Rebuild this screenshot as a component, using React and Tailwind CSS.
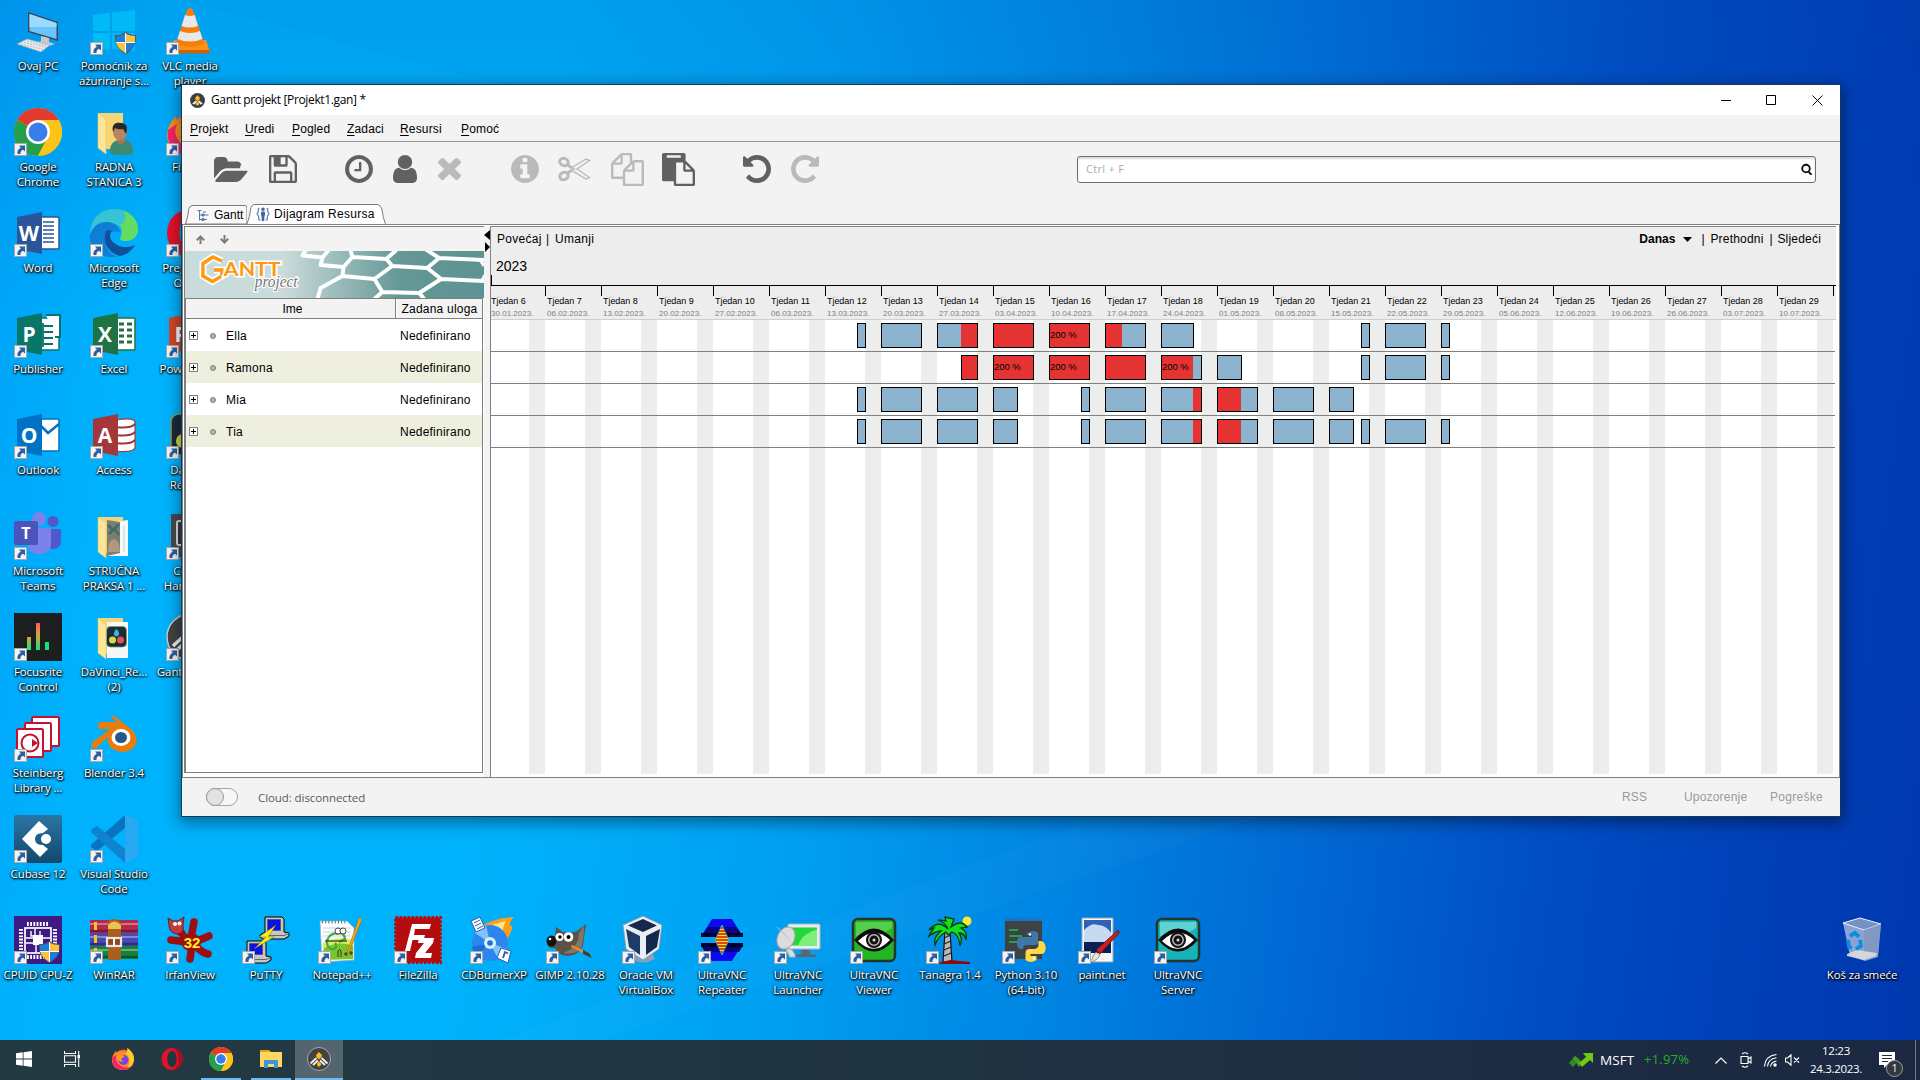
import React from "react";

const SEGOE = "font-['Open_Sans','Noto_Sans',sans-serif]";
const ARIAL = "font-['Liberation_Sans',Arial,sans-serif]";

/* ---------- desktop icon drawings, all on a 48 x 48 canvas ---------- */

const Shield = ({ x = 0, y = 0 }) => (
  <g transform={`translate(${x} ${y})`}>
    <path d="M10.500 0C14 2.500 17 3 21 3c.5 9-3 15-10.500 19C3 18-.5 12 0 3c4 0 7-.5 10.500-3z" fill="#4d5560" />
    <path d="M10 1.800V10H1.200C1 8 1 6 1.100 4 4.500 4 7.500 3.300 10 1.800z" fill="#1c7fd6" />
    <path d="M11 1.800V10h8.800c.2-2 .2-4 .1-6-3.400 0-6.400-.7-8.900-2.200z" fill="#fdc43f" />
    <path d="M1.400 11H10v9.700C5 18 2.300 15 1.400 11z" fill="#fdc43f" />
    <path d="M19.600 11H11v9.700c5-2.700 7.700-5.700 8.600-9.700z" fill="#1c7fd6" />
    <path d="M10.500 1v20M1 10.500h19" stroke="#fff" strokeWidth="1" />
  </g>
);

const ThisPC = () => (
  <>
    <path d="M14 5l30 10v19L14 25z" fill="#3d4650" />
    <path d="M15.500 7l27 9v16l-27-8z" fill="#6cc4ff" />
    <path d="M15.500 7l27 9v4L15.500 20z" fill="#9adaff" />
    <path d="M27 29l8 2v4l6 2-9 3-10-4 5-2z" fill="#c4cad0" />
    <path d="M3 37l10-5 23 6-9 7z" fill="#e8ebee" stroke="#9aa4ad" strokeWidth=".7" />
    <path d="M7 37l22 5.500M10 35.500l22 5M13 34l20 5" stroke="#a9b2ba" strokeWidth=".8" strokeDasharray="2 1" />
  </>
);

const WinUpdate = () => (
  <>
    <path d="M3 8l17-2.500V24H3zM22 5.200L45 3v21H22zM3 26h17v17L3 40zM22 26h23v18l-23-2z" fill="#00b9f5" />
    <Shield x={25} y={25} />
  </>
);

const Vlc = () => (
  <>
    <path d="M8 33h32l4 12H3z" fill="#ff8f12" />
    <path d="M3 43h41l-.5 3.500H3.500z" fill="#c96200" />
    <path d="M21 3q3-4 6 0l11 33q-14 8-28 0z" fill="#f57e0b" />
    <path d="M19 8l-3.500 11q8 3 16.500 0L28.800 8q-5 2-9.800 0zM14 24l-2.500 8q12.500 5 25 0L34 24q-10 4-20 0z" fill="#e6e8ea" />
  </>
);

const ChromeMark = () => (
  <>
    <circle cx="24" cy="24" r="24" fill="#fcc419" />
    <path d="M24 24L3.200 12A24 24 0 0 1 44.800 12L24 13z" fill="#e33b2e" />
    <path d="M3.200 12A24 24 0 0 0 24 48l9.500-18.500L24 24z" fill="#269f4a" />
    <path d="M33.500 29.500L24 48A24 24 0 0 0 44.800 12H24z" fill="#fcc419" />
    <circle cx="24" cy="24" r="12" fill="#fff" />
    <circle cx="24" cy="24" r="9.500" fill="#3a7cec" />
  </>
);

const FolderBack = ({ children }) => (
  <>
    <path d="M8 5h25v36H13z" fill="#f6d574" />
    {children}
    <path d="M8 5l8 6v35L8 40z" fill="#fde59a" stroke="#e8c662" strokeWidth=".6" />
  </>
);

const UserFolder = () => (
  <>
    <FolderBack />
    <path d="M20 46c-1-9 3-14 12-15 8 1 12 6 11 15q-11 2-23 0z" fill="#3d8a6f" />
    <path d="M27 28h8v6l-4 3-4-3z" fill="#a87455" />
    <ellipse cx="30" cy="24" rx="7" ry="8.500" fill="#b98461" />
    <path d="M23 24c-2-9 4-10 8-9 6 0 7 5 5 11l-3-5q-5 1-8-1z" fill="#2b2524" />
  </>
);

const PicFolder = () => (
  <FolderBack>
    <path d="M17 11l21-3v36H17z" fill="#f5f7f8" />
    <path d="M17 8l13 2v31l-13 3z" fill="#7d7d72" />
    <path d="M18 13l5 5-4 4M29 12l-5 5 5 6" stroke="#3f6c6b" strokeWidth="2.500" fill="none" />
    <path d="M18 40q0-12 6-13 6 2 6 13z" fill="#b0997c" />
    <path d="M34 14v26" stroke="#a5dbf0" />
  </FolderBack>
);

const Resolve = ({ s = 1, x = 0, y = 0 }) => (
  <g transform={`translate(${x} ${y}) scale(${s})`}>
    <rect x="5" y="3" width="40" height="41" rx="8" fill="#1d2c3a" stroke="#7aa06a" strokeWidth="1.500" />
    <path d="M25 8q8 7 4 13-4 4-8 0-4-6 4-13z" fill="#3bb4dc" />
    <circle cx="17" cy="30" r="7" fill="#d4dc42" />
    <circle cx="33" cy="30" r="7" fill="#e5534f" />
  </g>
);

const ResolveFolder = () => (
  <FolderBack>
    <path d="M17 9h21v36H17z" fill="#f5f7f8" />
    <Resolve s={0.5} x={14} y={12} />
  </FolderBack>
);

const Firefox = () => (
  <>
    <circle cx="25" cy="26" r="21" fill="#ff5b2e" />
    <path d="M10 8q-8 8-9 18C1 42 13 48 25 48s22-9 22-22c0-9-5-17-14-24 3 6 1 8-2 9-9-6-17-1-21 1q-1-2 0-4z" fill="#ff8a1e" />
    <path d="M33 2c12 8 16 18 13 28q-5 14-18 17 12-8 9-22-2-8-8-12 5-2 4-11z" fill="#ffca2c" />
    <path d="M2 22c-2 18 10 26 23 26q10 0 17-8-20 8-30-8-5-8-1-16z" fill="#f5246a" />
    <circle cx="25" cy="27" r="10.500" fill="#7542e5" />
    <path d="M12 17q6-3 10 0 5 0 5 3l-6 4q-1 5 4 6-9 3-12-5z" fill="#ff9a1f" />
  </>
);

const Opera = () => (
  <>
    <ellipse cx="24" cy="24" rx="23" ry="24" fill="#e3122c" />
    <path d="M24 0a24 24 0 0 1 0 48q14-4 14-24T24 0z" fill="#a90d22" />
    <ellipse cx="24" cy="24" rx="10.500" ry="18" fill="var(--hole,#00a5f9)" />
  </>
);

const Edge = () => (
  <>
    <path d="M24 0c16 0 24 11 24 20 0 8-6 12-12 12-5 0-7-2-5-5C33 19 28 14 20 14 10 14 3 19 0 26 0 10 10 0 24 0z" fill="#36c3d4" />
    <path d="M34 2c9 3 14 11 14 18 0 8-6 12-12 12-5 0-7-2-5-5q3-7-1-11Q38 12 34 2z" fill="#62dd62" />
    <path d="M0 26c2-8 9-14 18-13 8 1 12 6 12 11-6-4-14 0-14 9 0 8 6 14 13 15C12 51-2 40 0 26z" fill="#0d7fd8" />
    <path d="M16 22c-4 10 2 22 14 25 6-1 12-5 15-11-8 4-18 2-23-4-3-4-2-8 0-10-2-1-4-1-6 0z" fill="#144f9b" />
  </>
);

const OfficeTile = ({ color, dark, letter, children }) => (
  <>
    <path d="M26 8h17.500q1.500 0 1.500 1.500v29q0 1.500-1.500 1.500H26z" fill="#fff" stroke={color} strokeWidth="1.500" />
    {children}
    <path d="M3 8l25-5v42L3 40z" fill={dark} />
    <text x="15" y="31.500" fontSize="21" fontWeight="700" fill="#fff" textAnchor="middle" fontFamily="Open Sans">{letter}</text>
  </>
);

const Word = () => (
  <OfficeTile color="#2a5699" dark="#2a5699" letter="W">
    <path d="M29 13h11M29 17h11M29 21h11M29 25h11M29 29h11M29 33h11" stroke="#2a5699" strokeWidth="1.700" />
  </OfficeTile>
);
const Publisher = () => (
  <OfficeTile color="#077568" dark="#077568" letter="P">
    <path d="M32 5h14v22h-5" fill="#fff" stroke="#077568" strokeWidth="2" />
    <path d="M29 16h10M29 22h10M29 28h10M29 34h10M29 13v24" stroke="#077568" strokeWidth="1.800" />
  </OfficeTile>
);
const Excel = () => (
  <OfficeTile color="#1f7244" dark="#1f7244" letter="X">
    <path d="M29 14h5M37 14h5M29 20h5M37 20h5M29 26h5M37 26h5M29 32h5M37 32h5" stroke="#1f7244" strokeWidth="3.200" />
  </OfficeTile>
);
const PowerPoint = () => (
  <OfficeTile color="#d24625" dark="#d24625" letter="P">
    <circle cx="34" cy="20" r="6" fill="#d24625" />
  </OfficeTile>
);
const Outlook = () => (
  <OfficeTile color="#0072c6" dark="#0072c6" letter="O">
    <path d="M28 12h15v22H28z" fill="#fff" />
    <path d="M26 14l8 8 11-9" fill="none" stroke="#0072c6" strokeWidth="2.500" />
  </OfficeTile>
);
const Access = () => (
  <>
    <path d="M26 9q18-3 19 2v26q-3 5-19 3z" fill="#fff" stroke="#a4373a" strokeWidth="1.200" />
    <path d="M26 16q14 2 19-3M26 24q14 2 19-3M26 32q14 2 19-3" fill="none" stroke="#a4373a" strokeWidth="2" />
    <path d="M3 8l25-5v42L3 40z" fill="#a4373a" />
    <text x="15" y="31.500" fontSize="21" fontWeight="700" fill="#fff" textAnchor="middle" fontFamily="Open Sans">A</text>
  </>
);

const Teams = () => (
  <>
    <circle cx="39" cy="9.500" r="5.500" fill="#5059c9" />
    <path d="M34 17h12q1 0 1 1v11q0 8-9 8-4 0-4-4z" fill="#5059c9" />
    <circle cx="25" cy="7" r="7" fill="#7b83eb" />
    <path d="M14 16h22q1 0 1 1v14q0 11-12 11-11 0-11-11z" fill="#7b83eb" />
    <rect y="9" width="24" height="24" rx="2" fill="#4b53bc" />
    <text x="12" y="26.500" fontSize="16" fontWeight="700" fill="#fff" textAnchor="middle" fontFamily="Open Sans">T</text>
  </>
);

const HwBox = () => (
  <>
    <rect x="5" y="2" width="40" height="43" fill="#4a4a4c" />
    <rect x="11" y="9" width="28" height="24" rx="2" fill="#3a3a3c" stroke="#e0e0e0" strokeWidth="2" />
    <path d="M16 12v18M21 12v18" stroke="#777" strokeWidth="2" />
  </>
);

const Focusrite = () => (
  <>
    <defs>
      <linearGradient id="lv" x1="0" y1="0" x2="0" y2="1">
        <stop offset="0" stopColor="#ff5959" /><stop offset=".45" stopColor="#d9a13c" /><stop offset="1" stopColor="#11e87c" />
      </linearGradient>
      <linearGradient id="lv2" x1="0" y1="0" x2="0" y2="1">
        <stop offset="0" stopColor="#e09b42" /><stop offset="1" stopColor="#11e87c" />
      </linearGradient>
    </defs>
    <rect width="48" height="48" fill="#1d1e20" />
    <rect x="13" y="24" width="4" height="13" fill="url(#lv2)" />
    <rect x="22" y="10" width="4" height="27" fill="url(#lv)" />
    <rect x="31" y="29" width="4" height="8" fill="#18e07a" />
  </>
);

const GanttMark = () => (
  <>
    <circle cx="24" cy="24" r="23" fill="#434343" stroke="#c9c9c9" strokeWidth="1.500" />
    <path d="M7 33l12-11M12 36l10-9M41 33L29 22M36 36l-10-9" stroke="#f2f2f2" strokeWidth="3.500" />
    <path d="M24 10l5.500 5.500v4L24 25l-5.500-5.500v-4zM24 29l4 4v3l-4 4-4-4v-3z" fill="#fbbc1f" />
  </>
);

const TitleMark = () => (
  <>
    <circle cx="24" cy="24" r="24" fill="#3f3f41" />
    <path d="M7 34l11-10 5 4-9 9zM41 34L30 24l-5 4 9 9z" fill="#f2f2f2" />
    <path d="M24 7l7 7v6l-7 7-7-7v-6zM24 28l5 5v4l-5 4-5-4v-4z" fill="#fbbc1f" />
  </>
);

const Steinberg = () => (
  <g fill="#fff" stroke="#c8102e" strokeWidth="2">
    <rect x="18" y="3" width="27" height="29" rx="1.500" />
    <rect x="11" y="9" width="26" height="28" rx="1.500" />
    <rect x="3" y="15" width="26" height="28" rx="1.500" />
    <circle cx="16" cy="29" r="8.500" />
    <path d="M18 25l6 4-6 4z" fill="#c8102e" strokeWidth="0" />
  </g>
);

const Blender = () => (
  <>
    <path d="M21 2q3-1 5 1l16 13q6 6 4 14-4 8-14 8-11-1-14-9-1-3 0-6L6 34q-4 1-5-2 0-3 3-5l16-12H10q-3-1-2-5 1-2 3-2h16l-6-5z" fill="#e87d0d" />
    <ellipse cx="31" cy="23.500" rx="9.500" ry="8.500" fill="#fff" />
    <ellipse cx="31" cy="23.500" rx="6" ry="5.500" fill="#265787" />
  </>
);

const Cubase = () => (
  <>
    <defs>
      <linearGradient id="cub" x1="0" y1="0" x2="0" y2="1">
        <stop offset="0" stopColor="#2a76a5" /><stop offset="1" stopColor="#12486b" />
      </linearGradient>
    </defs>
    <rect width="48" height="48" rx="2" fill="url(#cub)" />
    <path d="M25 6l9 8-5 4q-8 0-8 6t8 6l5 4-8 8L8 24z" fill="#fff" />
    <circle cx="32" cy="24" r="5" fill="#fff" />
  </>
);

const VSCode = () => (
  <>
    <path d="M35 0l13 5v37l-13 6z" fill="#28a9f1" />
    <path d="M35 0v13L7 36l-5-3q-2-2 0-4z" fill="#0a73bd" />
    <path d="M2 14l5-3 28 23v14L2 18q-2-2 0-4z" fill="#1083cf" />
  </>
);

const CpuZ = () => (
  <>
    <rect width="48" height="48" fill="#3e1a83" />
    <path d="M13 8h22M13 41h22M7 13v22M41 13v22" stroke="#fff" strokeWidth="4" strokeDasharray="1.800 1.400" />
    <rect x="11" y="12" width="26" height="25" fill="none" stroke="#fff" strokeWidth="1.700" />
    <rect x="19" y="19" width="10" height="10" fill="#fff" />
    <path d="M21 13v6M26 15v5M12 22h7M12 27h7M29 22h7M22 29v7M17 15v5h5" stroke="#fff" strokeWidth="1.400" fill="none" />
    <Shield x={25} y={25} />
  </>
);

const WinRar = () => (
  <>
    <rect y="4" width="48" height="13" rx="1" fill="#b52a4a" />
    <rect y="17" width="48" height="13" rx="1" fill="#4a48b5" />
    <rect y="30" width="48" height="13" rx="1" fill="#15813c" />
    <path d="M0 8h48M0 21h48M0 34h48" stroke="#fff" strokeOpacity=".35" strokeWidth="2" />
    <path d="M0 15h48M0 28h48M0 41h48" stroke="#000" strokeOpacity=".35" strokeWidth="2.500" />
    <path d="M4 6h3v8H4zM4 19h3v8H4zM4 32h3v8H4z" fill="#f4c430" />
    <path d="M18 44V8q0-5 6-5t7 5v36z" fill="#a8601c" />
    <path d="M18 9q6-7 13 0v4H18z" fill="#ecc255" />
    <rect x="17" y="22" width="14" height="8" fill="#8a4a12" stroke="#e3e6ea" strokeWidth="2.200" />
    <path d="M24 22v8" stroke="#fff" strokeWidth="2" />
  </>
);

const Irfan = () => (
  <>
    <g stroke="#9c0f10" strokeLinecap="round" strokeWidth="7.500" fill="none">
      <path d="M28 6l-3 16M5 24l16 2M43 20l-14 6M42 38q-6-1-12-8M24 43l2-14" />
    </g>
    <ellipse cx="25" cy="26" rx="10" ry="9" fill="#9c0f10" />
    <path d="M10 16l6 8 6-4-4-6z" fill="#9c0f10" />
    <path d="M2 2l5 3h5l6-4-1 8q2 9-6 9-8-1-8-9z" fill="#c23a3a" stroke="#57100d" strokeWidth=".8" />
    <circle cx="9" cy="8" r="2" fill="#fff" /><circle cx="13.500" cy="7.500" r="2" fill="#fff" />
    <text x="26" y="32" fontSize="15" fontWeight="700" fill="#ffef20" textAnchor="middle" fontFamily="Liberation Sans">32</text>
  </>
);

const Computer = ({ x, y }) => (
  <g transform={`translate(${x} ${y})`}>
    <path d="M5 1h17l2 2v13l5 1v3l-5 3H3l-3-2v-2l5-3z" fill="#c6c6c6" stroke="#000" strokeWidth="1" />
    <path d="M7.500 3.500h13v11h-13z" fill="#0a10e8" stroke="#555" strokeWidth=".8" />
    <path d="M2 19.500h22l4-1.500" stroke="#666" fill="none" />
  </g>
);
const Putty = () => (
  <>
    <Computer x={18} y={0} />
    <Computer x={0} y={24} />
    <path d="M34 9L17 21h7L12 33l20-12h-6z" fill="#ffef10" stroke="#7a7000" strokeWidth=".5" />
  </>
);

const Notepadpp = () => (
  <>
    <path d="M2 5h27l7 7v32L4 46z" fill="#fbfdff" stroke="#9eb4c4" strokeWidth=".8" />
    <path d="M4 6h24" stroke="#5b6f7d" strokeWidth="3" strokeDasharray="1 2.200" />
    <path d="M5 12h28M5 16h28M5 20h28" stroke="#bcd7ea" strokeWidth="1" />
    <path d="M5 27l30-3v19L6 44z" fill="#7bc42c" />
    <path d="M5 27q14-8 30-3v6q-15-6-30 3z" fill="#d4ef63" />
    <path d="M19 17q-10 1-10 10 1 7 7 6 4-2 1-6M18 18q8-3 9 5l-6 3" fill="none" stroke="#4aa83a" strokeWidth="2.200" />
    <circle cx="20" cy="15" r="3" fill="#fff" stroke="#222" strokeWidth=".8" /><circle cx="25" cy="15" r="3" fill="#fff" stroke="#222" strokeWidth=".8" />
    <path d="M7 25h22" stroke="#333" strokeWidth="1.200" />
    <path d="M20 41v-6q2-3 3 0v6M26 38h4M28 36v4M31 37h4M33 35v4" stroke="#222" fill="none" strokeWidth=".9" />
    <path d="M44 3l-13 33-2 4 .5-5L41 2z" fill="#f5a91f" stroke="#a0670e" strokeWidth=".6" />
  </>
);

const FileZilla = () => (
  <>
    <rect x="1.500" y="1.500" width="45" height="45" fill="#b30d0d" stroke="#b30d0d" strokeWidth="3" strokeDasharray="2.500 1.500" />
    <path d="M18 8h19l-1.500 5H21l-1 6h11l-1.500 5H18.500L16 35h-5z" fill="#fff" />
    <path d="M25 22h15l-1 5-8 10h7l-1 5H21l1-5 8-10h-6z" fill="#fff" />
  </>
);

const CdBurner = () => (
  <>
    <path d="M12 10Q24 2 44 1q-5 5-4 9 3-2 2 3-3 9-8 14z" fill="#ff9d1c" />
    <path d="M18 10q10-3 18-5-4 7-3 12z" fill="#ffe884" />
    <circle cx="20" cy="27" r="18" fill="#2d86ee" />
    <path d="M20 27L5 17q4-7 11-8z" fill="#7fc4ff" />
    <path d="M20 27l17 6q-2 7-9 10z" fill="#7fc4ff" />
    <path d="M20 27L7 40q-4-4-5-9z" fill="#1b6bd8" />
    <circle cx="20" cy="27" r="6" fill="#d9f1ff" /><circle cx="20" cy="27" r="2.800" fill="#1b73d9" />
    <path d="M1 5l9-4 5 11-9 4z" fill="#fff" stroke="#2659b5" />
    <path d="M4 7l6-3M5 10l6-3M7 13l6-3" stroke="#2659b5" />
    <path d="M31 32l10 3-3 12-11-5z" fill="#fff" stroke="#2659b5" />
    <path d="M33 42l2-6 3 1.500" fill="none" stroke="#2659b5" strokeWidth="1.800" />
  </>
);

const Gimp = () => (
  <>
    <path d="M10 11l7 5q8 2 14-1L40 8q-2 14-3 22-4 9-15 10-9 0-13-8-8 1-8-6 1-6 8-6z" fill="#5b5347" />
    <path d="M38 10q0 18-4 24-8 5-17 3 12-4 15-13 0-8 6-14z" fill="#80766a" />
    <ellipse cx="5.500" cy="25" rx="5" ry="5.500" fill="#111" /><circle cx="4" cy="23" r="1.300" fill="#fff" />
    <circle cx="13.500" cy="21" r="4" fill="#fff" /><circle cx="22.500" cy="21" r="4.800" fill="#fff" />
    <circle cx="14" cy="21" r="1.700" /><circle cx="22.500" cy="21" r="2" />
    <path d="M26 29l12 6-1 2-12-6z" fill="#f08a24" /><path d="M37 34l6 3 3 5-9-4z" fill="#4a3b33" />
  </>
);

const VBox = () => (
  <g transform="translate(-3 0)">
    <path d="M14 38q10 6 20 0l2 5q-12 7-24 0z" fill="#8aa0b8" />
    <path d="M24 0l19 9-3 24-16 11L7 33 4 9z" fill="#e9eef5" stroke="#7f93ab" strokeWidth=".8" />
    <path d="M24 3l14 6.500L24 16 9 9.500z" fill="#16294a" />
    <path d="M7 13l14 7v19L10 31z" fill="#1f3c66" />
    <path d="M41 13l-14 7v19l11-8z" fill="#14284a" />
  </g>
);

const Repeater = () => (
  <>
    <path d="M14 3h20l11 18v6L34 45H14L3 27v-6z" fill="#0a0af0" />
    <path d="M9.500 11h29L45 21H3z" fill="#050580" />
    <path d="M3 17h42v4H3z" fill="#000028" />
    <path d="M3 21h42v6H3z" fill="#00a4f8" />
    <path d="M3 27h42v4H3z" fill="#000028" />
    <path d="M4 31h40l-3 5H7z" fill="#050580" />
    <path d="M24 9l7 15-7 15-7-15z" fill="#ffe60a" stroke="#2ad" strokeWidth="1" />
    <path d="M23 12h2M21 15h6M20 18h8M18.500 21h11M18 24h12M18.500 27h11M20 30h8M21 33h6M23 36h2" stroke="#d01414" strokeWidth="1.300" />
  </>
);

const Launcher = () => (
  <>
    <rect x="14" y="8" width="32" height="25" rx="1" fill="#e8edf0" stroke="#a9b4ba" />
    <rect x="18" y="11.500" width="25" height="18" fill="#23d63a" />
    <path d="M24 29.500q4-12 19-16v16z" fill="#7df07c" />
    <path d="M27 34h8l1 4 6 1v2H21v-2l6-1z" fill="#5a6670" />
    <ellipse cx="12" cy="22" rx="8.500" ry="11.500" transform="rotate(25 12 22)" fill="#dcdcdc" stroke="#a5a5a5" />
    <path d="M3 11l12 12M12 33l4 8h5v-2l-3-5z" stroke="#bbb" fill="#ddd" />
  </>
);

const Eye = ({ color, light }) => (
  <>
    <rect x="3" y="3" width="42" height="42" rx="5" fill={color} stroke="#27332f" strokeWidth="2.500" />
    <path d="M6 6h36v6Q28 22 6 20z" fill={light} opacity=".6" />
    <path d="M4 24q20-23 40 0-20 23-40 0z" fill="#0b0b0b" />
    <path d="M8 25q16-16 32-1-16 17-32 1z" fill="#fff" />
    <circle cx="24" cy="24" r="8" fill="#111" /><circle cx="24" cy="24" r="5.200" fill="none" stroke="#bbb" strokeWidth="1.500" />
    <circle cx="24" cy="24" r="1.500" fill="#ddd" />
  </>
);
const EyeGreen = () => <Eye color="#25b524" light="#77df66" />;
const EyeTeal = () => <Eye color="#16b3b8" light="#8ee4e6" />;

const Palm = () => (
  <>
    <circle cx="41" cy="5" r="4.500" fill="#ffe92b" />
    <path d="M19 15h5l2 31h-9z" fill="#b9b9b9" stroke="#111" strokeWidth="1.200" />
    <path d="M18 22l7-3M18 28l7-3M18 34l7-3M18 40l7-3" stroke="#222" strokeWidth="1.300" />
    <path d="M22 13Q12 3 3 14l5-2-6 9q7-6 13-6-8 6-6 14 3-9 11-13l2 3 4-3q7 2 8 14 3-8-1-13 6 0 7 7 2-8-5-12l6-1Q35 3 25 11l3-8-9-2 1 4-8-1q8 3 10 9z" fill="#10e020" stroke="#053d07" strokeWidth="1.300" />
    <path d="M12 47l12-3 20 2v2H12z" fill="#930808" />
  </>
);

const Python = () => (
  <>
    <rect x="3" y="3" width="37" height="40" fill="#3d4244" /><rect x="3" y="2" width="37" height="3" fill="#1976c5" />
    <path d="M7 14h9M7 20h13M7 26h9" stroke="#23c04a" strokeWidth="1.400" />
    <path d="M25 17q7-4 11 0v9q0 3-3 3h-8q-4 0-4 4h-3q-4-2-3-9 1-3 4-3h11v-2h-5z" fill="#3d78a9" />
    <path d="M37 22h3q5 2 4 9-1 4-4 4H29v2h6v4q-6 4-11 0v-7q0-4 4-4h5q4-1 4-4z" transform="translate(-.5 3)" fill="#ffd846" />
    <circle cx="28" cy="18.500" r="1.200" fill="#fff" /><circle cx="32" cy="42.500" r="1.200" fill="#fff" />
  </>
);

const PaintNet = () => (
  <>
    <path d="M4 2h31v44H4z" fill="#f6f7f8" stroke="#9ba7b0" />
    <path d="M6 4h27v33H6z" fill="#2c62b8" />
    <path d="M6 14q8-8 14-5 8 0 13 8v9H6z" fill="#c6dbf2" />
    <path d="M6 26h27v11H6z" fill="#0b2057" />
    <path d="M18 34L39 15q3-1 2 2L22 38z" fill="#c91f22" stroke="#5b0b0d" strokeWidth=".7" />
    <path d="M9 46q6-1 6-6l3-4 4 3q-4 8-13 7z" fill="#e8e4dc" stroke="#555" strokeWidth=".6" />
  </>
);

const Bin = () => (
  <>
    <path d="M5 7l16-5 22 6-3 33-13 4-15-5z" fill="#b8c7e0" opacity=".75" />
    <path d="M5 7l17-5 21 6-17 6z" fill="#7591c4" stroke="#e8eefa" strokeWidth="1" />
    <path d="M26 14l17-6-4 31-13 5z" fill="#7d95bd" opacity=".8" />
    <path d="M9 38l10-4 20 3-1 3-12 4-17-4z" fill="#dbdcd8" opacity=".9" />
    <path d="M12 20l5-3 4 4M10 24l1 7 3 1M18 33l5-3-1-6" fill="none" stroke="#0f8ce0" strokeWidth="3.800" />
  </>
);

/* ---------- desktop ---------- */

const ICONS = [
  [0, 0, "Ovaj PC", ThisPC, false],
  [1, 0, "Pomoćnik za\nažuriranje s...", WinUpdate],
  [2, 0, "VLC media\nplayer", Vlc],
  [0, 1, "Google\nChrome", ChromeMark],
  [1, 1, "RADNA\nSTANICA 3", UserFolder, false],
  [2, 1, "Firefox", Firefox],
  [0, 2, "Word", Word],
  [1, 2, "Microsoft\nEdge", Edge],
  [2, 2, "Preglednik\nOpera", Opera],
  [0, 3, "Publisher", Publisher],
  [1, 3, "Excel", Excel],
  [2, 3, "PowerPoint", PowerPoint],
  [0, 4, "Outlook", Outlook],
  [1, 4, "Access", Access],
  [2, 4, "DaVinci\nResolve", Resolve],
  [0, 5, "Microsoft\nTeams", Teams],
  [1, 5, "STRUČNA\nPRAKSA 1 ...", PicFolder, false],
  [2, 5, "CPUID\nHardware", HwBox],
  [0, 6, "Focusrite\nControl", Focusrite],
  [1, 6, "DaVinci_Re...\n(2)", ResolveFolder, false],
  [2, 6, "GanttProject", GanttMark],
  [0, 7, "Steinberg\nLibrary ...", Steinberg],
  [1, 7, "Blender 3.4", Blender],
  [0, 8, "Cubase 12", Cubase],
  [1, 8, "Visual Studio\nCode", VSCode],
  [0, 9, "CPUID CPU-Z", CpuZ],
  [1, 9, "WinRAR", WinRar],
  [2, 9, "IrfanView", Irfan],
  [3, 9, "PuTTY", Putty],
  [4, 9, "Notepad++", Notepadpp],
  [5, 9, "FileZilla", FileZilla],
  [6, 9, "CDBurnerXP", CdBurner],
  [7, 9, "GIMP 2.10.28", Gimp],
  [8, 9, "Oracle VM\nVirtualBox", VBox],
  [9, 9, "UltraVNC\nRepeater", Repeater],
  [10, 9, "UltraVNC\nLauncher", Launcher],
  [11, 9, "UltraVNC\nViewer", EyeGreen],
  [12, 9, "Tanagra 1.4", Palm],
  [13, 9, "Python 3.10\n(64-bit)", Python],
  [14, 9, "paint.net", PaintNet],
  [15, 9, "UltraVNC\nServer", EyeTeal],
  [24, 9, "Koš za smeće", Bin, false],
];

const DesktopIcon = ({ col, row, label, Icon, shortcut = true }) => (
  <div className="flex flex-col items-center" style={{ gridColumn: col + 1, gridRow: row + 1 }}>
    <div className="relative h-12 w-12">
      <svg viewBox="0 0 48 48" className="h-12 w-12"><Icon /></svg>
      {shortcut && (
        <svg viewBox="0 0 13 13" className="absolute bottom-0 left-0 h-[13px] w-[13px]">
          <rect x=".5" y=".5" width="12" height="12" fill="#f4f4f4" stroke="#a8a8a8" />
          <path d="M5 2.500h6v6L9 6.700Q6 8 6.500 11H3.600Q2.500 7 6.800 4.400z" fill="#2c5ea6" />
        </svg>
      )}
    </div>
    <div className={`mt-[3px] text-center text-[11.5px] leading-[15px] tracking-[-0.1px] whitespace-pre text-white [text-shadow:1px_1px_2px_#000,0_1px_2px_#000,0_0_3px_#000a] ${SEGOE}`}>
      {label}
    </div>
  </div>
);

/* ---------- application window ---------- */

const MENU = [
  ["P", "rojekt", "w-[55px]"],
  ["U", "redi", "w-[47px]"],
  ["P", "ogled", "w-[55px]"],
  ["Z", "adaci", "w-[53px]"],
  ["R", "esursi", "w-[61px]"],
  ["P", "omoć", "w-[50px]"],
];

const UNDO = "M1664 896q0 156-61 298t-164 245-245 164-298 61q-172 0-327-72.500T305 1387q-7-10-6.500-22.500t8.500-20.500l137-138q10-9 25-9 16 2 23 12 73 95 179 147t225 52q104 0 198.500-40.500T1258 1258t109.500-163.500T1408 896t-40.500-198.500T1258 534t-163.500-109.500T896 384q-98 0-188 35.500T548 521l137 138q31 30 14 69-17 40-59 40H192q-26 0-45-19t-19-45V256q0-42 40-59 39-17 69 14l130 129q107-101 244.500-156.500T896 128q156 0 298 61t245 164 164 245 61 298z";

const TOOLS = [
  { cls: "ml-8 w-[34px] h-[25px]", vb: "64 128 1910 1408", d: "M1943 952q0 31-31 66l-336 396q-43 51-120.500 86.500T1312 1536H224q-34 0-60.500-13T137 1480q0-31 31-66l336-396q43-51 120.500-86.500T768 896h1088q34 0 60.500 13t26.500 43zM1536 608v160H768q-94 0-197 47.500T407 935L70 1331l-5 6q0-4-.5-12.500T64 1312V352q0-92 66-158t158-66h320q92 0 158 66t66 158v32h544q92 0 158 66t66 158z" },
  { cls: "ml-[21px] w-7 h-7", vb: "128 128 1536 1536", d: "M512 1536h768v-384H512v384zm896 0h128V640q0-14-10-38.500t-20-34.500l-281-281q-10-10-34-20t-39-10v416q0 40-28 68t-68 28H480q-40 0-68-28t-28-68V256H256v1280h128v-416q0-40 28-68t68-28h832q40 0 68 28t28 68v416zm-384-928V288q0-13-9.500-22.500T992 256H800q-13 0-22.500 9.500T768 288v320q0 13 9.500 22.500T800 640h192q13 0 22.500-9.500t9.500-22.500zm640 32v928q0 40-28 68t-68 28H224q-40 0-68-28t-28-68V224q0-40 28-68t68-28h928q40 0 88 20t76 48l280 280q28 28 48 76t20 88z" },
  { cls: "ml-12 w-7 h-7", vb: "128 128 1536 1536", d: "M1024 544v448q0 14-9 23t-23 9H672q-14 0-23-9t-9-23v-64q0-14 9-23t23-9h224V544q0-14 9-23t23-9h64q14 0 23 9t9 23zm416 352q0-148-73-273t-198-198-273-73-273 73-198 198-73 273 73 273 198 198 273 73 273-73 198-198 73-273zm224 0q0 209-103 385.500T1281.500 1561 896 1664t-385.500-103T231 1281.500 128 896t103-385.500T510.500 231 896 128t385.500 103T1561 510.500 1664 896z" },
  { cls: "ml-5 w-6 h-7", vb: "256 128 1280 1536", d: "M1536 1399q0 109-62.500 187t-150.500 78H469q-88 0-150.500-78T256 1399q0-85 8.500-160.500t31.500-152 58.500-131 94-89T583 832q131 128 313 128t313-128q76 0 134.500 34.500t94 89 58.500 131 31.500 152 8.500 160.500zm-256-887q0 159-112.500 271.500T896 896 624.500 783.500 512 512t112.500-271.500T896 128t271.500 112.500T1280 512z" },
  { cls: "ml-[21px] w-[23px] h-[22px]", off: true, vb: "302 366 1188 1188", d: "M1490 1322q0 40-28 68l-136 136q-28 28-68 28t-68-28l-294-294-294 294q-28 28-68 28t-68-28l-136-136q-28-28-28-68t28-68l294-294-294-294q-28-28-28-68t28-68l136-136q28-28 68-28t68 28l294 294 294-294q28-28 68-28t68 28l136 136q28 28 28 68t-28 68l-294 294 294 294q28 28 28 68z" },
  { cls: "ml-[50px] w-7 h-7", off: true, vb: "128 128 1536 1536", d: "M1152 1376v-160q0-14-9-23t-23-9h-96V672q0-14-9-23t-23-9H672q-14 0-23 9t-9 23v160q0 14 9 23t23 9h96v320h-96q-14 0-23 9t-9 23v160q0 14 9 23t23 9h448q14 0 23-9t9-23zm-128-896V320q0-14-9-23t-23-9H800q-14 0-23 9t-9 23v160q0 14 9 23t23 9h192q14 0 23-9t9-23zm640 416q0 209-103 385.500T1281.500 1561 896 1664t-385.500-103T231 1281.500 128 896t103-385.500T510.500 231 896 128t385.500 103T1561 510.500 1664 896z" },
  { cls: "ml-[19px] w-[33px] h-[26px]", off: true, cut: true },
  { cls: "ml-5 w-[33px] h-[33px]", off: true, vb: "0 0 1792 1792", d: "M1696 384q40 0 68 28t28 68v1216q0 40-28 68t-68 28H736q-40 0-68-28t-28-68v-288H96q-40 0-68-28t-28-68V640q0-40 20-88t48-76L476 68q28-28 76-48t88-20h416q40 0 68 28t28 68v328q68-40 128-40h416zm-544 213L853 896h299V597zM512 213L213 512h299V213zm196 647l316-316V128H640v416q0 40-28 68t-68 28H128v640h512v-256q0-40 20-88t48-76zm956 804V512h-384v416q0 40-28 68t-68 28H768v640h896z" },
  { cls: "ml-[18px] w-[33px] h-[33px]", vb: "0 0 1792 1792", d: "M768 1664h896v-640h-416q-40 0-68-28t-28-68V512H768v1152zm256-1440v-64q0-13-9.500-22.500T992 128H288q-13 0-22.500 9.500T256 160v64q0 13 9.500 22.500T288 256h704q13 0 22.500-9.500t9.500-22.500zm256 672h299l-299-299v299zm512 128v672q0 40-28 68t-68 28H736q-40 0-68-28t-28-68v-160H96q-40 0-68-28t-28-68V96q0-40 28-68T96 0h1088q40 0 68 28t28 68v328q21 13 36 28l408 408q28 28 48 76t20 88z" },
  { cls: "ml-12 w-7 h-7", vb: "128 128 1536 1536", d: UNDO },
  { cls: "ml-5 w-7 h-7 -scale-x-100", off: true, vb: "128 128 1536 1536", d: UNDO },
];

const Tool = ({ t }) =>
  t.cut ? (
    <svg viewBox="0 0 33 26" className={`shrink-0 ${t.cls}`} fill="none" stroke="#bababa">
      <ellipse cx="6" cy="6" rx="4.300" ry="3.600" transform="rotate(25 6 6)" strokeWidth="3" />
      <ellipse cx="6" cy="20" rx="4.300" ry="3.600" transform="rotate(-25 6 20)" strokeWidth="3" />
      <path d="M9 8.500L14 12M9 17.500L14 14" strokeWidth="3" />
      <path d="M14 11.500L28 3l3.500 1.500L19 13l12.500 8.500L28 23l-14-8.500z" strokeWidth="1.400" />
      <circle cx="16" cy="13" r="1" strokeWidth="1" />
    </svg>
  ) : (
    <svg viewBox={t.vb} preserveAspectRatio="none" className={`shrink-0 ${t.cls}`} fill={t.off ? "#bababa" : "#616161"}>
      <path d={t.d} fillRule="nonzero" />
    </svg>
  );

const Banner = () => (
  <svg viewBox="0 0 300 47" preserveAspectRatio="none" className="block h-[47px] w-[299px] shrink-0">
    <defs>
      <linearGradient id="bn" x1="0" x2="1" y1="0" y2="0">
        <stop offset="0" stopColor="#c9dbda" /><stop offset=".33" stopColor="#c9dbda" /><stop offset=".72" stopColor="#649796" /><stop offset="1" stopColor="#5d9392" />
      </linearGradient>
    </defs>
    <rect width="300" height="47" fill="url(#bn)" />
    <g fill="none" stroke="#fff" strokeWidth="4" strokeLinejoin="round">
      <path d="M121 -1L118 4.500L138 6.500L144 -1M138 6.500L136 14L159 16L168 6L166 -1M168 6L202 8L212 -1M202 8L208 15L243 17L255 7L241 -2M255 7L300 9M243 17L257 28L300 30M257 28L235 42L240 48M159 16L158 25M190 28L208 15M158 25L190 28L198 41L235 42M198 41L190 48M158 25L136 37L133 48" />
      <path d="M296 9L300 15M298 29l3-5" strokeWidth="3" />
    </g>
    <path d="M37 10L28 6L18 12.500V25L27.500 30.500L37 25V19H29" fill="none" stroke="#fff" strokeWidth="7" />
    <path d="M37 10L28 6L18 12.500V25L27.500 30.500L37 25V19H29" fill="none" stroke="#ff9710" strokeWidth="3.400" />
    <text x="39" y="25.500" fontSize="18" fontWeight="700" textLength="57" lengthAdjust="spacingAndGlyphs" fill="#ff9710" stroke="#fff" strokeWidth="3" paintOrder="stroke" fontFamily="Lato">ANTT</text>
    <text x="70" y="36" fontSize="17" fontStyle="italic" textLength="43" lengthAdjust="spacingAndGlyphs" fill="#767676" stroke="#fff" strokeWidth="2.500" paintOrder="stroke" fontFamily="Liberation Serif">project</text>
  </svg>
);

const PEOPLE = ["Ella", "Ramona", "Mia", "Tia"];

const WEEKS = [
  "30.01.2023.", "06.02.2023.", "13.02.2023.", "20.02.2023.", "27.02.2023.", "06.03.2023.", "13.03.2023.", "20.03.2023.",
  "27.03.2023.", "03.04.2023.", "10.04.2023.", "17.04.2023.", "24.04.2023.", "01.05.2023.", "08.05.2023.", "15.05.2023.",
  "22.05.2023.", "29.05.2023.", "05.06.2023.", "12.06.2023.", "19.06.2023.", "26.06.2023.", "03.07.2023.", "10.07.2023.",
];

/* Each bar: week number, first day, then segments of [overloaded, days, text]. */
const LOADS = [
  [
    [12, 4, [0, 1]], [13, 0, [0, 5]], [14, 0, [0, 3], [1, 2]], [15, 0, [1, 5]], [16, 0, [1, 5, "200 %"]],
    [17, 0, [1, 2], [0, 3]], [18, 0, [0, 4]], [21, 4, [0, 1]], [22, 0, [0, 5]], [23, 0, [0, 1]],
  ],
  [
    [14, 3, [1, 2]], [15, 0, [1, 5, "200 %"]], [16, 0, [1, 5, "200 %"]], [17, 0, [1, 5]], [18, 0, [1, 4, "200 %"], [0, 1]],
    [19, 0, [0, 3]], [21, 4, [0, 1]], [22, 0, [0, 5]], [23, 0, [0, 1]],
  ],
  [
    [12, 4, [0, 1]], [13, 0, [0, 5]], [14, 0, [0, 5]], [15, 0, [0, 3]], [16, 4, [0, 1]], [17, 0, [0, 5]],
    [18, 0, [0, 4], [1, 1]], [19, 0, [1, 3], [0, 2]], [20, 0, [0, 5]], [21, 0, [0, 3]],
  ],
  [
    [12, 4, [0, 1]], [13, 0, [0, 5]], [14, 0, [0, 5]], [15, 0, [0, 3]], [16, 4, [0, 1]], [17, 0, [0, 5]],
    [18, 0, [0, 4], [1, 1]], [19, 0, [1, 3], [0, 2]], [20, 0, [0, 5]], [21, 0, [0, 3]], [21, 4, [0, 1]], [22, 0, [0, 5]], [23, 0, [0, 1]],
  ],
];

const Bar = ({ bar }) => {
  const [week, day, ...segs] = bar;
  const days = segs.reduce((n, s) => n + s[1], 0);
  return (
    <div
      className="row-start-1 mt-[3px] -mr-px flex h-[25px] overflow-hidden border border-black"
      style={{ gridColumn: `${(week - 6) * 7 + day + 1} / span ${days}` }}
    >
      {segs.map(([over, n, text], i) => (
        <div
          key={i}
          className={`flex items-center overflow-hidden text-[9.5px] tracking-[-0.05px] whitespace-nowrap ${over ? "bg-[#e53333]" : "bg-[#8cb4ce]"}`}
          style={{ flex: `${n} 1 0px` }}
        >
          {text}
        </div>
      ))}
    </div>
  );
};

const Chart = () => (
  <div className="flex h-[551px] w-[1346px] flex-col overflow-hidden border-t border-l border-[#808080]">
    <div className="flex h-[59px] shrink-0 flex-col border-b border-black bg-[#ededed]">
      <div className="flex h-6 items-center pr-[15px] pl-[6px] text-[12px]">
        <span className="w-[45px] tracking-[0.3px]">Povećaj</span>
        <span className="w-[13px] pl-1">|</span>
        <span className="tracking-[0.3px]">Umanji</span>
        <span className="ml-auto font-bold">Danas</span>
        <svg viewBox="0 0 9 5" className="mx-[8px] h-[5px] w-[9px]"><path d="M0 0h9L4.500 5z" /></svg>
        <span className="w-[9px] pl-px">|</span>
        <span className="w-[58px] pl-px tracking-[0.2px]">Prethodni</span>
        <span className="w-[10px] pl-[2px]">|</span>
        <span className="tracking-[0.2px]">Sljedeći</span>
      </div>
      <div className="flex grow flex-col">
        <div className="pt-[7px] pl-[5px] text-[14px] leading-[16px]">2023</div>
        <div className="mt-auto h-[10px] w-px bg-black" />
      </div>
    </div>
    <div className="-ml-[2px] flex h-[34px] shrink-0 border-b border-[#cfcfcf] bg-[#ededed]">
      {WEEKS.map((d, i) => (
        <div key={d} className="w-14 shrink-0 whitespace-nowrap">
          <div className="h-[10px] w-px bg-black" />
          <div className="pl-[2px] text-[9px] leading-[10px] tracking-[-0.05px]">Tjedan {i + 6}</div>
          <div className="mt-[3px] pl-[2px] text-[8px] leading-[10px] tracking-[0.02px] text-[#808080]">{d}</div>
        </div>
      ))}
      <div className="h-[10px] w-px shrink-0 bg-black" />
    </div>
    <div className="h-[455px] w-[1346px] shrink-0 bg-white pr-px">
      <div className="-ml-[2px] h-[454px] bg-[repeating-linear-gradient(90deg,#fff_0,#fff_40px,#ededed_40px,#ededed_56px)]">
        {LOADS.map((bars, r) => (
          <div key={r} className="grid h-8 w-[1346px] grid-cols-[repeat(168,8px)] border-b border-[#808080]">
            {bars.map((b, i) => <Bar key={i} bar={b} />)}
          </div>
        ))}
      </div>
    </div>
  </div>
);

const ResourceTable = () => (
  <div className="flex h-[475px] w-[298px] flex-col border-t border-b border-[#808080] bg-white text-[12px]">
    <div className="flex h-full w-[298px] flex-col border-r border-l border-[#808080]">
      <div className="flex h-[20px] border-b border-[#808080] bg-[#f3f3f3]">
        <div className="flex w-[210px] items-center justify-center border-r border-[#808080] pt-px pl-1">Ime</div>
        <div className="flex grow items-center justify-center border-l border-white pt-px tracking-[0.2px]">Zadana uloga</div>
      </div>
      {PEOPLE.map((p, i) => (
        <div key={p} className={`flex h-8 items-center pt-px ${i % 2 ? "bg-[#efefe0]" : "bg-white"}`}>
          <svg viewBox="0 0 9 9" className="ml-[3px] h-[9px] w-[9px]">
            <rect x=".5" y=".5" width="8" height="8" fill="#fff" stroke="#808080" />
            <path d="M2 4.500h5M4.500 2v5" stroke="#000" />
          </svg>
          <div className="ml-3 h-[6px] w-[6px] rounded-full border border-[#7d7d7d] bg-[#b5b5b5]" />
          <span className="ml-[10px] w-[174px] tracking-[0.25px]">{p}</span>
          <span className="tracking-[0.22px]">Nedefinirano</span>
        </div>
      ))}
    </div>
  </div>
);

const AppWindow = () => (
  <div className={`absolute top-[84px] left-[181px] flex h-[733px] w-[1660px] flex-col border border-[#17375a] bg-[#f3f3f3] text-black shadow-[0_4px_14px_2px_rgba(0,0,0,0.4)] ${ARIAL}`}>
    <div className={`flex h-[30px] shrink-0 items-center bg-white text-[12px] ${SEGOE}`}>
      <svg viewBox="0 0 48 48" className="ml-[8px] h-[15px] w-[15px]"><TitleMark /></svg>
      <span className="ml-[6px] tracking-[-0.35px]">Gantt projekt [Projekt1.gan] *</span>
      <svg viewBox="0 0 102 11" className="mr-[17px] ml-auto h-[11px] w-[102px]" fill="none" stroke="#000">
        <path d="M0 5.500h10M45.500 .5h9v9h-9zM91.500 .5l10 10M101.500 .5l-10 10" />
      </svg>
    </div>
    <div className="flex h-[27px] shrink-0 items-center border-b border-[#979797] pt-[2px] pl-[8px] text-[12px] tracking-[0.15px]">
      {MENU.map(([k, rest, w]) => (
        <span key={k + rest} className={`${w} whitespace-nowrap`}>
          <span className="underline underline-offset-2">{k}</span>{rest}
        </span>
      ))}
    </div>
    <div className="flex h-[54px] shrink-0 items-center">
      {TOOLS.map((t, i) => <Tool key={i} t={t} />)}
      <div className={`mr-[24px] ml-auto flex h-[27px] w-[739px] items-center justify-between rounded-[3px] border border-[#6f6f6f] bg-white pr-[3px] pl-[8px] text-[11px] text-[#a8acae] shadow-[inset_0_2px_2px_#dcdcdc] ${SEGOE}`}>
        <span className="tracking-[0.3px]">Ctrl + F</span>
        <svg viewBox="0 0 12 12" className="h-3 w-3" fill="none" stroke="#111" strokeWidth="1.900">
          <circle cx="6" cy="5.500" r="3.800" /><path d="M8.600 8.600L11.500 12" />
        </svg>
      </div>
    </div>
    <div className="flex h-[28px] shrink-0 items-end pl-[3px] text-[12px]">
      <div className="relative flex h-[19px] w-[62px] items-center leading-none">
        <svg viewBox="0 0 62 19" className="absolute inset-0 h-full w-full">
          <path d="M.5 19Q3 12 3.500 6Q4 .5 8 .5H60Q62 .5 62 3V19z" fill="#f9f9f9" stroke="#7a7a7a" />
        </svg>
        <svg viewBox="0 0 12 12" className="relative ml-[12px] h-3 w-3" fill="none" stroke="#5d79ab">
          <path d="M.5 1.500h4M2.500 2v9.500M2.500 6h3M2.500 10.500h3M6 6h5.500M6 10.500h4M6 3h3" /><path d="M5 5h2v2H5zM5 9.500h2v2H5z" fill="#5d79ab" />
        </svg>
        <span className="relative ml-[5px]">Gantt</span>
      </div>
      <div className="relative flex h-[20px] w-[139px] items-center">
        <svg viewBox="0 0 139 20" className="absolute inset-0 h-full w-full">
          <path d="M0 20Q3 12 3.500 6Q4 .5 8 .5H130Q134 1 135 6Q136 14 138.500 20" fill="#fff" stroke="#7a7a7a" />
        </svg>
        <svg viewBox="0 0 14 14" className="relative ml-[9px] h-[14px] w-[14px]" fill="#45659c">
          <circle cx="7" cy="2.200" r="1.700" /><path d="M5.200 4.500h3.600l.4 4H8.500l-.3 5.500H5.800L5.500 8.500h-.7z" />
          <g fill="none" stroke="#5f7db4" strokeWidth="1.200"><path d="M3.500 1Q1.500 1.500 2.500 4L1 7l1.500 2 .5 4h1.500M10.500 1q2 .5 1 3L13 7l-1.500 2-.5 4H9.500" /></g>
        </svg>
        <span className="relative ml-[4px] tracking-[0.3px]">Dijagram Resursa</span>
      </div>
    </div>
    <div className="flex h-[554px] shrink-0 border border-[#808080] bg-white pt-px pl-px">
      <div className="flex h-[547px] w-[300px] shrink-0 flex-col border-t border-l border-[#808080]">
        <div className="flex h-6 shrink-0 items-center bg-[#f3f3f3]">
          <svg viewBox="0 0 33 9" className="ml-[11px] h-[9px] w-[33px]" fill="none" stroke="#7d7d7d" strokeWidth="2">
            <path d="M4.500 9V2M.8 5.200L4.500 1.500l3.700 3.700M28.500 0v7M24.800 3.800l3.700 3.700 3.700-3.700" />
          </svg>
        </div>
        <Banner />
        <ResourceTable />
      </div>
      <div className="h-full w-[6px] shrink-0 bg-[#f3f3f3] pt-[4px]">
        <svg viewBox="0 0 6 22" className="h-[22px] w-[6px]"><path d="M6 0v10L0 5zM1 12v10l5-5z" /></svg>
      </div>
      <Chart />
    </div>
    <div className="flex h-[38px] grow items-center text-[12px]">
      <div className="ml-[24px] flex h-[18px] w-[32px] rounded-full border border-[#a3a3a3] bg-[#f7f7f7]">
        <div className="-mt-px -ml-px h-[18px] w-[18px] rounded-full border border-[#9a9a9a] bg-[#e2e2e2]" />
      </div>
      <span className={`ml-[20px] pt-px text-[11.5px] tracking-[-0.08px] text-[#5a5a5a] ${SEGOE}`}>Cloud: disconnected</span>
      <span className="ml-auto w-[62px] text-[#9a9a9a] tracking-[0.2px]">RSS</span>
      <span className="w-[86px] text-[#9a9a9a] tracking-[0.2px]">Upozorenje</span>
      <span className="mr-[17px] text-[#9a9a9a] tracking-[0.3px]">Pogreške</span>
    </div>
  </div>
);

/* ---------- taskbar ---------- */

const TaskButton = ({ wide, active, open, children }) => (
  <div className={`flex h-10 flex-col items-center justify-center ${wide} ${active ? "bg-[#53666f]" : ""}`}>
    <div className="flex h-[38px] items-center">{children}</div>
    <div className={`h-[2px] ${open ? "bg-[#76b9ed]" : ""} ${active ? "w-12" : "w-10"}`} />
  </div>
);

const Taskbar = () => (
  <div className={`flex h-10 shrink-0 items-center bg-[linear-gradient(90deg,#233a43,#213540_40%,#1d2d42_75%,#1a2841)] text-white ${SEGOE}`}>
    <TaskButton wide="w-12">
      <svg viewBox="0 0 16 16" className="h-4 w-4" fill="#fff"><path d="M0 2.200L6.700 1.300v6.200H0zM7.500 1.200L16 0v7.500H7.500zM0 8.400h6.700v6.300L0 13.800zM7.500 8.400H16V16l-8.500-1.200z" /></svg>
    </TaskButton>
    <TaskButton wide="w-12">
      <svg viewBox="0 0 16 16" className="h-4 w-4" fill="none" stroke="#fff" strokeWidth="1.100">
        <path d="M.5 0v2.500h11V0M.5 16v-2.500h11V16M.5 4.700h11v6.600H.5zM14.700 0v4M14.700 8v8" /><path d="M14 4.500h1.500V7H14z" fill="#fff" />
      </svg>
    </TaskButton>
    <TaskButton wide="w-[53px]"><svg viewBox="0 0 48 50" className="h-6 w-6"><Firefox /></svg></TaskButton>
    <TaskButton wide="w-[46px] [--hole:#22383f]"><svg viewBox="0 0 48 48" className="h-6 w-[22px]"><Opera /></svg></TaskButton>
    <TaskButton wide="w-[52px]" open><svg viewBox="0 0 48 48" className="h-6 w-6"><ChromeMark /></svg></TaskButton>
    <TaskButton wide="w-12" open>
      <svg viewBox="0 0 22 20" className="h-5 w-[22px]">
        <path d="M0 1h9l2 2h-9L0 5z" fill="#e8a317" /><path d="M0 3h22v15H0z" fill="#ffd75e" /><path d="M4 19v-7q0-1 1-1h12q1 0 1 1v7h-4v-4H8v4z" fill="#3c95d8" />
      </svg>
    </TaskButton>
    <TaskButton wide="w-12" open active><svg viewBox="0 0 48 48" className="h-6 w-6"><GanttMark /></svg></TaskButton>

    <svg viewBox="0 0 24 16" className="mr-[7px] ml-auto h-4 w-6">
      <path d="M0 11l6-7 4 4-6 7z" fill="#2f8a1c" /><path d="M6 4l4 3 3 4-3 4-6-9z" fill="#3f9e1e" /><path d="M10 11l7-6-3-4h10v10l-3-3-8 7z" fill="#72c915" />
    </svg>
    <span className="w-[44px] text-[13.5px] tracking-[0.1px]">MSFT</span>
    <span className="w-[71px] text-[13px] tracking-[0.2px] text-[#22b022]">+1.97%</span>
    <svg viewBox="0 0 12 7" className="h-[7px] w-3" fill="none" stroke="#fff" strokeWidth="1.200"><path d="M.5 6.500L6 1l5.500 5.500" /></svg>
    <svg viewBox="0 0 12 16" className="ml-[13px] h-4 w-3" fill="none" stroke="#fff" strokeWidth="1.100">
      <path d="M1 4.500h7v7H1zM8 7l3-2v6L8 9M2 2q3-2.500 6 0M2 14q3 2.500 6 0" />
    </svg>
    <svg viewBox="0 0 13 13" className="ml-[12px] h-[13px] w-[13px]" fill="none" stroke="#fff" strokeWidth="1.100">
      <path d="M.5 12.500Q1 2 12.500 .5M3.500 12.500Q4 5 12.500 3.800M6.500 12.500Q7 8 12.500 7" /><circle cx="11" cy="11" r="1.200" fill="#fff" />
    </svg>
    <svg viewBox="0 0 15 12" className="ml-[8px] h-3 w-[15px]" fill="none" stroke="#fff" strokeWidth="1.100">
      <path d="M.5 4h2L6 .8v10.400L2.500 8h-2zM9 3.500l5 5M14 3.500l-5 5" />
    </svg>
    <div className="ml-[9px] w-[54px] text-center text-[11.5px] leading-[18px] tracking-[-0.3px]">
      12:23<br />24.3.2023.
    </div>
    <div className="relative mr-[16px] ml-[16px] h-[30px] w-5">
      <svg viewBox="0 0 16 16" className="mt-[7px] h-4 w-4">
        <path d="M0 0h16v13H8l-3 3v-3H0z" fill="#fff" /><path d="M3 3.500h10M3 6.500h10M3 9.500h6" stroke="#1c2b41" />
      </svg>
      <div className="absolute top-[15px] left-[7px] flex h-[17px] w-[17px] items-center justify-center rounded-full border border-[#9aa0a8] bg-[#33383f] text-[10px]">1</div>
    </div>
    <div className="mr-1 h-10 w-px bg-[#6d7888]" />
  </div>
);

export default function App() {
  return (
    <div className="relative flex h-[1080px] w-[1920px] flex-col overflow-hidden bg-[linear-gradient(180deg,rgba(0,60,160,0.14)_0%,transparent_30%),linear-gradient(97deg,#00a2f8_0%,#00b2fd_8%,#00b2fb_28%,#00a2f3_42%,#0086e3_56%,#0068d3_69%,#004ec4_80%,#003eb6_92%,#0038ae_100%)]">
      <svg viewBox="0 0 1920 1080" className="absolute inset-0 h-full w-full">
        <path d="M180 0L500 84H1300V0z" fill="#0070d8" opacity=".05" />
        <path d="M600 1040L1260 817H1100L500 1040z" fill="#fff" opacity=".02" />
      </svg>
      <div className="relative grid h-[1040px] shrink-0 grid-cols-[repeat(25,76px)] grid-rows-[repeat(10,101px)] pt-[7px]">
        {ICONS.map(([c, r, label, Icon, s]) => (
          <DesktopIcon key={label} col={c} row={r} label={label} Icon={Icon} shortcut={s} />
        ))}
      </div>
      <AppWindow />
      <Taskbar />
    </div>
  );
}
